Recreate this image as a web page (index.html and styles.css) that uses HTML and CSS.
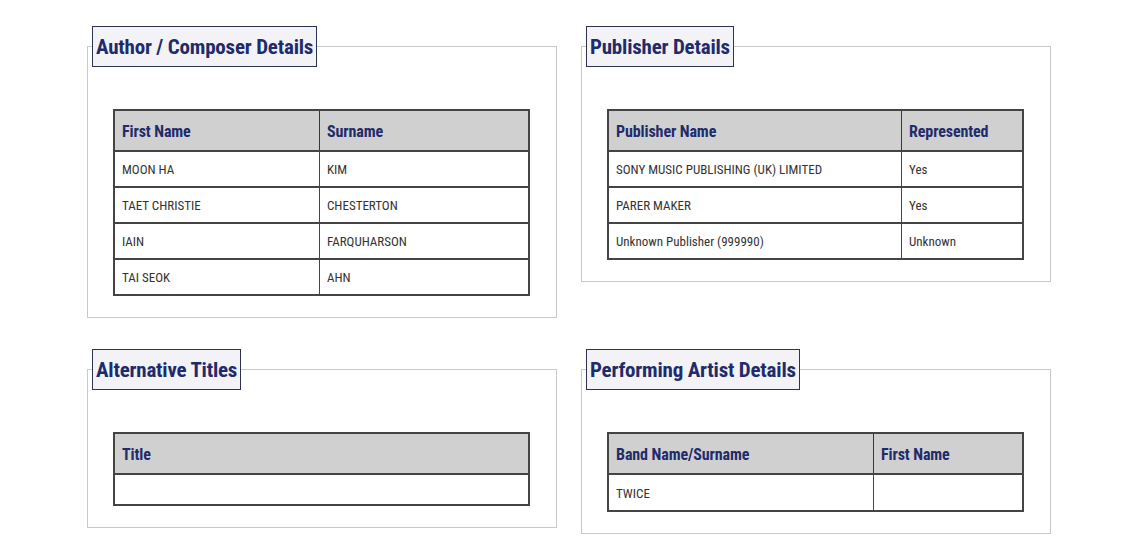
FILE: index.html
```html
<!DOCTYPE html>
<html>
<head>
<meta charset="utf-8">
<link rel="stylesheet" href="styles.css">
</head>
<body>
<div class="grid">
  <fieldset class="panel">
    <legend class="panel-title">Author / Composer Details</legend>
    <table class="data">
      <thead><tr><th class="c-author">First Name</th><th>Surname</th></tr></thead>
      <tbody>
        <tr><td>MOON HA</td><td>KIM</td></tr>
        <tr><td>TAET CHRISTIE</td><td>CHESTERTON</td></tr>
        <tr><td>IAIN</td><td>FARQUHARSON</td></tr>
        <tr><td>TAI SEOK</td><td>AHN</td></tr>
      </tbody>
    </table>
  </fieldset>
  <fieldset class="panel">
    <legend class="panel-title">Publisher Details</legend>
    <table class="data">
      <thead><tr><th class="c-pub">Publisher Name</th><th>Represented</th></tr></thead>
      <tbody>
        <tr><td>SONY MUSIC PUBLISHING (UK) LIMITED</td><td>Yes</td></tr>
        <tr><td>PARER MAKER</td><td>Yes</td></tr>
        <tr><td>Unknown Publisher (999990)</td><td>Unknown</td></tr>
      </tbody>
    </table>
  </fieldset>
  <fieldset class="panel">
    <legend class="panel-title">Alternative Titles</legend>
    <table class="data">
      <thead><tr><th>Title</th></tr></thead>
      <tbody>
        <tr class="empty"><td></td></tr>
      </tbody>
    </table>
  </fieldset>
  <fieldset class="panel">
    <legend class="panel-title">Performing Artist Details</legend>
    <table class="data">
      <thead><tr><th class="c-band">Band Name/Surname</th><th>First Name</th></tr></thead>
      <tbody>
        <tr class="single"><td>TWICE</td><td></td></tr>
      </tbody>
    </table>
  </fieldset>
</div>
</body>
</html>
```
FILE: styles.css
```css
html, body {
  margin: 0;
  background: #ffffff;
}
body {
  font-family: "Roboto Condensed", "Liberation Sans Narrow", Roboto, "Liberation Sans", sans-serif;
  color: #333333;
}
.grid {
  display: grid;
  grid-template-columns: 470px 470px;
  column-gap: 24px;
  row-gap: 31px;
  align-items: start;
  padding: 26px 0 0 87px;
}
.panel {
  margin: 0;
  min-width: 0;
  border: 1px solid #c9c9c9;
  padding: 0 4px 21px;
}
.panel-title {
  box-sizing: border-box;
  height: 41px;
  line-height: 41px;
  padding: 0 3px;
  margin: 0;
  border: 1px solid #2e3150;
  background: #f3f3f7;
  color: #1f2b6b;
  font-size: 21px;
  font-weight: 700;
  letter-spacing: -0.2px;
  white-space: nowrap;
}
.data {
  width: 417px;
  margin: 42px 22px 0 21px;
  border-collapse: collapse;
  border: 2px solid #444444;
  table-layout: fixed;
}
.data th {
  background: #d0d0d0;
  color: #1f2b6b;
  font-size: 16px;
  font-weight: 700;
  letter-spacing: -0.1px;
  text-align: left;
  height: 38px;
  padding: 1px 7px 0;
  border: 1px solid #2e3363;
  border-bottom: 2px solid #444444;
}
.data td {
  font-size: 13px;
  color: #333333;
  height: 33px;
  padding: 1px 7px 0;
  border: 1px solid #444444;
  border-bottom-width: 2px;
  white-space: nowrap;
}
.data .empty td {
  height: 28px;
}
.data .single td {
  height: 34px;
}
.c-author { width: 190px; }
.c-pub { width: 278px; }
.c-band { width: 250px; }
```
